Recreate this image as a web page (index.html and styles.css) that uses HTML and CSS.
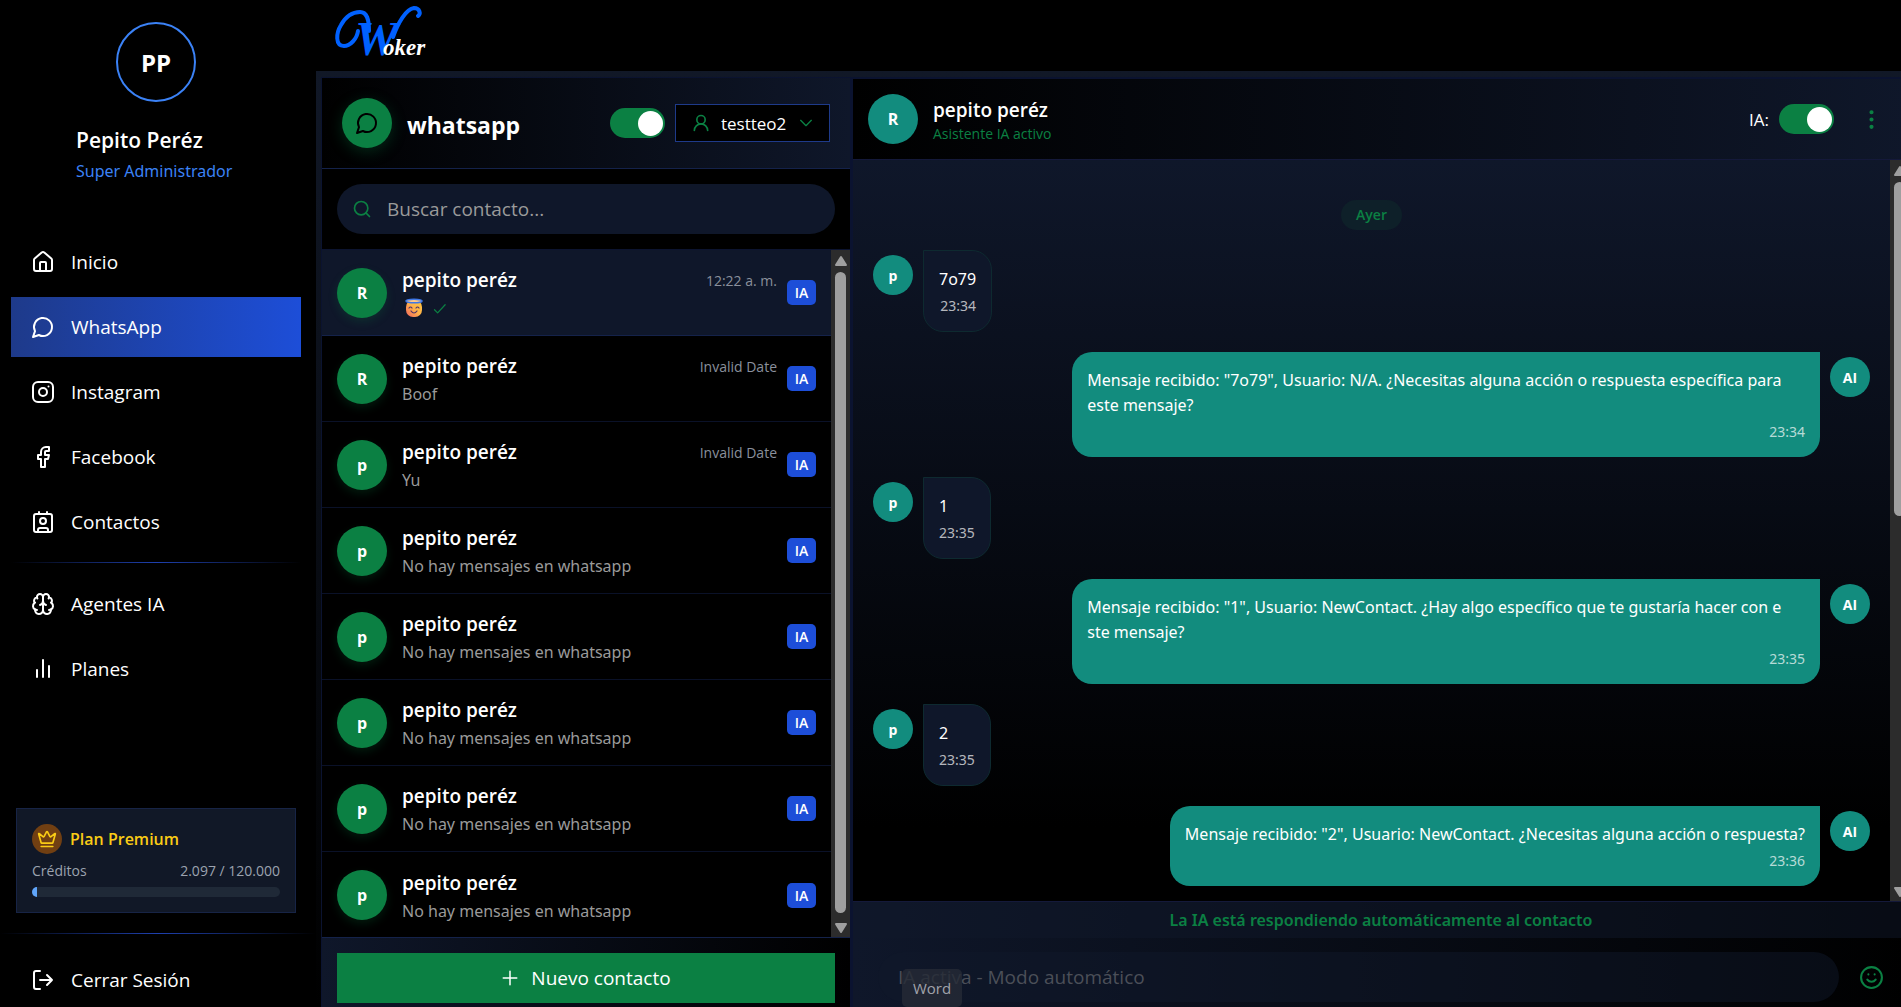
FILE: index.html
```html
<!DOCTYPE html>
<html lang="es">
<head>
    <meta charset="UTF-8">
    <meta name="viewport" content="width=device-width, initial-scale=1.0">
    <title>Woker</title>
    <link rel="stylesheet" href="styles.css">
</head>
<body>
    <!-- shared icons -->
    <svg class="sprite" aria-hidden="true">
        <symbol id="i-chat" viewBox="0 0 24 24"><path d="M7.9 20A9 9 0 1 0 4 16.1L2 22Z"/></symbol>
        <symbol id="i-up" viewBox="0 0 14 12"><path d="M7 2 12 10H2Z"/></symbol>
        <symbol id="i-down" viewBox="0 0 14 12"><path d="M7 10 2 2H12Z"/></symbol>
    </svg>

    <div class="app">
        <aside class="sidebar">
            <div class="avatar-user">PP</div>
            <div class="user-info">
                <h2>Pepito Peréz</h2>
                <p>Super Administrador</p>
            </div>

            <nav class="menu">
                <a href="#" class="menu-item">
                    <svg class="icon" viewBox="0 0 24 24"><path d="M15 21v-8a1 1 0 0 0-1-1h-4a1 1 0 0 0-1 1v8"/><path d="M3 10a2 2 0 0 1 .709-1.528l7-5.999a2 2 0 0 1 2.582 0l7 5.999A2 2 0 0 1 21 10v9a2 2 0 0 1-2 2H5a2 2 0 0 1-2-2z"/></svg>
                    Inicio
                </a>
                <a href="#" class="menu-item active">
                    <svg class="icon"><use href="#i-chat"/></svg>
                    WhatsApp
                </a>
                <a href="#" class="menu-item">
                    <svg class="icon" viewBox="0 0 24 24"><rect x="2" y="2" width="20" height="20" rx="5"/><circle cx="12" cy="12" r="4"/><path d="M17.5 6.5h.01"/></svg>
                    Instagram
                </a>
                <a href="#" class="menu-item">
                    <svg class="icon" viewBox="0 0 24 24"><path d="M18 2h-3a5 5 0 0 0-5 5v3H7v4h3v8h4v-8h3l1-4h-4V7a1 1 0 0 1 1-1h3z"/></svg>
                    Facebook
                </a>
                <a href="#" class="menu-item">
                    <svg class="icon" viewBox="0 0 24 24"><path d="M16 2v2M8 2v2M7 22v-2a2 2 0 0 1 2-2h6a2 2 0 0 1 2 2v2"/><circle cx="12" cy="11" r="3"/><rect x="3" y="4" width="18" height="18" rx="2"/></svg>
                    Contactos
                </a>
                <hr class="divider inset">
                <a href="#" class="menu-item">
                    <svg class="icon" viewBox="0 0 24 24"><path d="M12 5a3 3 0 1 0-5.997.125 4 4 0 0 0-2.526 5.77 4 4 0 0 0 .556 6.588A4 4 0 1 0 12 18Z"/><path d="M12 5a3 3 0 1 1 5.997.125 4 4 0 0 1 2.526 5.77 4 4 0 0 1-.556 6.588A4 4 0 1 1 12 18Z"/><path d="M15 13a4.5 4.5 0 0 1-3-4 4.500 4.500 0 0 1-3 4M17.600 6.500a3 3 0 0 0 .400-1.375M6 5.125a3 3 0 0 0 .400 1.375M3.477 10.900a4 4 0 0 1 .585-.400M19.940 10.500a4 4 0 0 1 .585.400M6 18a4 4 0 0 1-1.970-.520M19.970 17.480A4 4 0 0 1 18 18"/></svg>
                    Agentes IA
                </a>
                <a href="#" class="menu-item">
                    <svg class="icon" viewBox="0 0 24 24"><path d="M18 20v-11M12 20V3M6 20v-7"/></svg>
                    Planes
                </a>
            </nav>

            <div class="plan">
                <div class="plan-title">
                    <span class="plan-badge"><svg class="icon" viewBox="0 0 24 24"><path d="M11.562 3.266a.5.5 0 0 1 .876 0L15.390 8.870a1 1 0 0 0 1.516.294L21.183 5.500a.5.5 0 0 1 .798.519l-2.834 10.246a1 1 0 0 1-.956.734H5.810a1 1 0 0 1-.957-.734L2.020 6.020a.5.5 0 0 1 .798-.519l4.276 3.664a1 1 0 0 0 1.516-.294zM5 21h14"/></svg></span>
                    Plan Premium
                </div>
                <div class="plan-row">
                    <span>Créditos</span>
                    <span>2.097 / 120.000</span>
                </div>
                <div class="bar"><div class="bar-fill" style="width: 2%"></div></div>
            </div>

            <hr class="divider">
            <button class="menu-item logout">
                <svg class="icon" viewBox="0 0 24 24"><path d="M9 21H5a2 2 0 0 1-2-2V5a2 2 0 0 1 2-2h4M16 17l5-5-5-5M21 12H9"/></svg>
                Cerrar Sesión
            </button>
        </aside>

        <main class="main">
            <header class="topbar">
                <svg class="logo" viewBox="0 0 92 54" role="img" aria-label="Woker">
                    <path d="M23 26C22 34 15 41 9 41C0 41 1 28 6 20C11 11 18 7 25 7C32 7 34 14 34 26"/>
                    <path d="M58 32C63 18 71 4 79 3C85 3 86 9 83 11"/>
                    <text class="logo-w" x="20" y="50">W<tspan class="logo-rest" x="48" y="50">oker</tspan></text>
                </svg>
            </header>

            <div class="workspace">
                <section class="contacts">
                    <div class="contacts-head">
                        <span class="channel"><svg class="icon"><use href="#i-chat"/></svg></span>
                        <h1>whatsapp</h1>
                        <input type="checkbox" class="switch" aria-label="whatsapp" checked>
                        <label class="account">
                            <svg class="icon" viewBox="0 0 24 24"><circle cx="12" cy="8" r="5"/><path d="M20 21a8 8 0 0 0-16 0"/></svg>
                            <select aria-label="Cuenta">
                                <option>testteo2</option>
                            </select>
                            <svg class="icon small" viewBox="0 0 24 24"><path d="m4 8 8 8 8-8"/></svg>
                        </label>
                    </div>

                    <div class="search-row">
                        <label class="search">
                            <svg class="icon" viewBox="0 0 24 24"><circle cx="11" cy="11" r="8"/><path d="m21 21-4.300-4.300"/></svg>
                            <input type="text" placeholder="Buscar contacto..." aria-label="Buscar contacto">
                        </label>
                    </div>

                    <div class="list-wrap">
                        <ul class="list">
                            <li class="contact selected">
                                <span class="avatar">R</span>
                                <div class="contact-body">
                                    <h3>pepito peréz</h3>
                                    <p>
                                        <svg class="emoji" viewBox="0 0 20 20" role="img" aria-label="angelito"><defs><linearGradient id="face" x1="0" y1="1" x2="1" y2="0"><stop offset="0" stop-color="#f2625f"/><stop offset=".5" stop-color="#ffb24a"/><stop offset="1" stop-color="#ffc83d"/></linearGradient></defs><rect x="2" y="2" width="16" height="17" rx="7" fill="url(#face)"/><ellipse cx="10" cy="3" rx="8" ry="1.800" fill="#ffc98a" stroke="#3f78e8" stroke-width="1.600"/><path d="M5 10q1.500-2 3 0M12 10q1.500-2 3 0M7 13q3 4 6 0" fill="none" stroke="#533566" stroke-width="1.200" stroke-linecap="round"/></svg>
                                        <svg class="icon check" viewBox="0 0 24 24"><path d="m4 14 5 5L21 6"/></svg>
                                    </p>
                                </div>
                                <time>12:22 a. m.</time>
                                <span class="tag">IA</span>
                            </li>
                            <li class="contact">
                                <span class="avatar">R</span>
                                <div class="contact-body"><h3>pepito peréz</h3><p>Boof</p></div>
                                <time>Invalid Date</time>
                                <span class="tag">IA</span>
                            </li>
                            <li class="contact">
                                <span class="avatar">p</span>
                                <div class="contact-body"><h3>pepito peréz</h3><p>Yu</p></div>
                                <time>Invalid Date</time>
                                <span class="tag">IA</span>
                            </li>
                            <li class="contact">
                                <span class="avatar">p</span>
                                <div class="contact-body"><h3>pepito peréz</h3><p>No hay mensajes en whatsapp</p></div>
                                <span class="tag">IA</span>
                            </li>
                            <li class="contact">
                                <span class="avatar">p</span>
                                <div class="contact-body"><h3>pepito peréz</h3><p>No hay mensajes en whatsapp</p></div>
                                <span class="tag">IA</span>
                            </li>
                            <li class="contact">
                                <span class="avatar">p</span>
                                <div class="contact-body"><h3>pepito peréz</h3><p>No hay mensajes en whatsapp</p></div>
                                <span class="tag">IA</span>
                            </li>
                            <li class="contact">
                                <span class="avatar">p</span>
                                <div class="contact-body"><h3>pepito peréz</h3><p>No hay mensajes en whatsapp</p></div>
                                <span class="tag">IA</span>
                            </li>
                            <li class="contact">
                                <span class="avatar">p</span>
                                <div class="contact-body"><h3>pepito peréz</h3><p>No hay mensajes en whatsapp</p></div>
                                <span class="tag">IA</span>
                            </li>
                        </ul>
                        <div class="scrollbar" aria-hidden="true">
                            <svg class="arrow"><use href="#i-up"/></svg>
                            <div class="track"><div class="thumb"></div></div>
                            <svg class="arrow"><use href="#i-down"/></svg>
                        </div>
                    </div>

                    <div class="contacts-foot">
                        <button class="new-contact">
                            <svg class="icon" viewBox="0 0 24 24"><path d="M3 12h18M12 3v18"/></svg>
                            Nuevo contacto
                        </button>
                    </div>
                </section>

                <section class="chat">
                    <div class="chat-head">
                        <span class="avatar teal">R</span>
                        <div class="chat-who">
                            <h3>pepito peréz</h3>
                            <p>Asistente IA activo</p>
                        </div>
                        <label class="ia-label" for="ia">IA:</label>
                        <input type="checkbox" id="ia" class="switch" checked>
                        <button class="icon-btn more" aria-label="Opciones">
                            <svg class="icon" viewBox="0 0 24 24"><circle cx="12" cy="5" r="1"/><circle cx="12" cy="12" r="1"/><circle cx="12" cy="19" r="1"/></svg>
                        </button>
                    </div>

                    <div class="chat-body">
                        <div class="messages">
                            <div class="day">Ayer</div>
                            <div class="msg in">
                                <span class="avatar small teal">p</span>
                                <div class="bubble"><p>7o79</p><time>23:34</time></div>
                            </div>
                            <div class="msg out">
                                <div class="bubble long"><p>Mensaje recibido: "7o79", Usuario: N/A. ¿Necesitas alguna acción o respuesta específica para<br>este mensaje?</p><time>23:34</time></div>
                                <span class="avatar small teal">AI</span>
                            </div>
                            <div class="msg in">
                                <span class="avatar small teal">p</span>
                                <div class="bubble"><p>1</p><time>23:35</time></div>
                            </div>
                            <div class="msg out">
                                <div class="bubble long"><p>Mensaje recibido: "1", Usuario: NewContact. ¿Hay algo específico que te gustaría hacer con e<br>ste mensaje?</p><time>23:35</time></div>
                                <span class="avatar small teal">AI</span>
                            </div>
                            <div class="msg in">
                                <span class="avatar small teal">p</span>
                                <div class="bubble"><p>2</p><time>23:35</time></div>
                            </div>
                            <div class="msg out">
                                <div class="bubble"><p>Mensaje recibido: "2", Usuario: NewContact. ¿Necesitas alguna acción o respuesta?</p><time>23:36</time></div>
                                <span class="avatar small teal">AI</span>
                            </div>
                        </div>
                        <div class="scrollbar" aria-hidden="true">
                            <svg class="arrow"><use href="#i-up"/></svg>
                            <div class="track"><div class="thumb" style="height: 48%"></div></div>
                            <svg class="arrow"><use href="#i-down"/></svg>
                        </div>
                    </div>

                    <div class="chat-foot">
                        <div class="status">La IA está respondiendo automáticamente al contacto</div>
                        <div class="composer">
                            <input type="text" placeholder="IA activa - Modo automático" aria-label="Mensaje" disabled>
                            <span class="tooltip">Word</span>
                            <button class="icon-btn" aria-label="Emojis">
                                <svg class="icon" viewBox="0 0 24 24"><circle cx="12" cy="12" r="10"/><path d="M8 14s1.500 2 4 2 4-2 4-2M9 9h.01M15 9h.01"/></svg>
                            </button>
                        </div>
                    </div>
                </section>
            </div>
        </main>
    </div>
</body>
</html>
```

FILE: styles.css
```css
* {
    box-sizing: border-box;
}

body, html {
    margin: 0;
    padding: 0;
    height: 100%;
    overflow: hidden;
    background-color: #000;
    color: #fff;
    font-family: "Open Sans", "Noto Sans", sans-serif;
}

h1, h2, h3, p, ul {
    margin: 0;
    padding: 0;
}

button, input, select {
    font-family: inherit;
    color: inherit;
    border: none;
    background: none;
    outline: none;
}

.sprite {
    display: none;
}

.icon {
    flex: none;
    width: 24px;
    height: 24px;
    fill: none;
    stroke: currentColor;
    stroke-width: 2;
    stroke-linecap: round;
    stroke-linejoin: round;
}

.app {
    display: flex;
    height: 100vh;
}

/* running text */
.user-info p,
.contact p,
.bubble,
.status {
    font-family: "Noto Sans", sans-serif;
    font-size: 16px;
}

/* sidebar */
.sidebar {
    flex: none;
    width: 316px;
    display: flex;
    flex-direction: column;
    padding-top: 22px;
}

.avatar-user {
    width: 80px;
    height: 80px;
    margin-left: 116px;
    border: 2px solid #3b82f6;
    border-radius: 50%;
    display: flex;
    align-items: center;
    justify-content: center;
    font-size: 24px;
    font-weight: 700;
}

.user-info {
    margin: 22px 0 38px 76px;
}

.user-info h2 {
    font-size: 21px;
    line-height: 32px;
    font-weight: 600;
}

.user-info p {
    line-height: 30px;
    color: #3b82f6;
}

.menu {
    display: flex;
    flex-direction: column;
    gap: 5px;
    padding: 8px 15px 0 11px;
}

.menu-item {
    display: flex;
    align-items: center;
    gap: 16px;
    height: 60px;
    padding: 0 20px;
    color: #fff;
    font-size: 19px;
    text-decoration: none;
}

.menu-item.active {
    background: linear-gradient(to right, #1e3a8a, #1d4ed8);
}

.divider {
    width: 100%;
    height: 1px;
    margin: 0;
    border: none;
    background: linear-gradient(to right, transparent, #1e40af, transparent);
}

.divider.inset {
    margin: 5px 0 6px;
}

.plan {
    margin: auto 20px 20px 16px;
    padding: 15px;
    background-color: #111827;
    border: 1px solid #172446;
}

.plan-title {
    display: flex;
    align-items: center;
    gap: 8px;
    color: #facc15;
    font-size: 16px;
    line-height: 30px;
    font-weight: 600;
}

.plan-badge {
    width: 30px;
    height: 30px;
    border-radius: 50%;
    background-color: #713f12;
    display: flex;
    align-items: center;
    justify-content: center;
}

.plan-badge .icon {
    width: 20px;
    height: 20px;
}

.plan-row {
    display: flex;
    justify-content: space-between;
    padding: 5px 0;
    color: #9ca3af;
    font-size: 14px;
    line-height: 23px;
}

.bar {
    height: 10px;
    border-radius: 5px;
    background-color: #1f2937;
    overflow: hidden;
}

.bar-fill {
    height: 100%;
    background-color: #60a5fa;
}

.logout {
    flex: none;
    height: 54px;
    margin: 19px 15px 0 11px;
    cursor: pointer;
}

/* main area */
.main {
    flex: 1;
    min-width: 0;
    display: flex;
    flex-direction: column;
}

.topbar {
    flex: none;
    height: 71px;
    padding: 5px 19px;
}

.logo {
    width: 92px;
    height: 54px;
    overflow: visible;
}

.logo path {
    fill: none;
    stroke: #0061ff;
    stroke-width: 4;
    stroke-linecap: round;
}

.logo text {
    font-family: "Liberation Serif", serif;
    font-style: italic;
    font-weight: 700;
}

.logo-w {
    fill: #0061ff;
    font-size: 48px;
}

.logo-rest {
    fill: #fff;
    font-size: 23px;
}

/* the chat runs a little past the window edge */
.workspace {
    flex: 1;
    min-height: 0;
    display: flex;
    margin-right: -8px;
    padding: 6px 0 0 5px;
    background: linear-gradient(#111827, #000);
}

.contacts {
    flex: none;
    width: 532px;
    display: flex;
    flex-direction: column;
    background-color: #000;
    border: solid #0b1330;
    border-width: 1px 3px 0 1px;
}

.contacts-head {
    display: flex;
    align-items: center;
    height: 91px;
    padding: 0 20px;
    background: linear-gradient(to right, #000, #0f172a);
    border-bottom: 1px solid #14224a;
}

.contacts-head h1 {
    margin: 3px auto 0 15px;
    font-size: 23px;
    font-weight: 700;
}

.channel {
    display: flex;
    align-items: center;
    justify-content: center;
    width: 50px;
    height: 50px;
    border-radius: 50%;
    background-color: #0b8043;
    box-shadow: 0 4px 15px rgba(11, 128, 67, 0.3);
    color: #000;
}

.switch {
    appearance: none;
    flex: none;
    width: 55px;
    height: 30px;
    margin: 0;
    padding: 2px;
    border-radius: 15px;
    background-color: #333;
    display: flex;
    align-items: center;
}

.switch::before {
    content: "";
    width: 25px;
    height: 25px;
    border-radius: 50%;
    background-color: #fff;
}

.switch:checked {
    justify-content: flex-end;
    background-color: #0b8043;
}

.account {
    display: flex;
    align-items: center;
    gap: 10px;
    height: 38px;
    margin-left: 10px;
    padding: 0 15px;
    background-color: #000;
    border: 1px solid #1e3a8a;
    color: #0b8043;
}

.account .icon {
    width: 20px;
    height: 20px;
}

.account .icon.small {
    width: 16px;
    height: 16px;
}

.account select {
    appearance: none;
    width: 67px;
    padding: 0;
    color: #fff;
    font-size: 17px;
}

.search-row {
    padding: 15px;
    border-bottom: 1px solid #0c1430;
}

.search {
    display: flex;
    align-items: center;
    gap: 15px;
    height: 50px;
    padding: 0 15px;
    border-radius: 25px;
    background-color: #0f172a;
    color: #0b8043;
}

.search .icon {
    width: 20px;
    height: 20px;
}

.search input {
    flex: 1;
    min-width: 0;
    padding: 0;
    color: #fff;
    font-size: 19px;
}

.search input::placeholder {
    color: #9a9a9a;
}

.list-wrap {
    flex: 1;
    min-height: 0;
    display: flex;
}

.list {
    flex: 1;
    min-width: 0;
    overflow: hidden;
    list-style: none;
}

.contact {
    display: flex;
    align-items: center;
    height: 86px;
    padding: 0 15px;
    border-bottom: 1px solid #0a1128;
}

.contact.selected {
    background-color: #0f172a;
    border-color: #14224a;
}

.contact:last-child {
    border-bottom: none;
}

.avatar {
    flex: none;
    display: flex;
    align-items: center;
    justify-content: center;
    width: 50px;
    height: 50px;
    border-radius: 50%;
    background-color: #0b8043;
    box-shadow: 0 4px 10px rgba(11, 128, 67, 0.2);
    font-size: 16px;
    font-weight: 700;
}

.avatar.teal {
    background-color: #128c7e;
    box-shadow: none;
}

.avatar.small {
    width: 40px;
    height: 40px;
    margin-top: 5px;
    font-size: 14px;
}

.contact-body {
    flex: 1;
    min-width: 0;
    margin-left: 15px;
    padding-top: 3px;
}

.contact h3 {
    font-size: 19px;
    line-height: 28px;
    font-weight: 600;
}

.contact p {
    display: flex;
    align-items: center;
    height: 28px;
    color: #9a9a9a;
}

.emoji {
    width: 20px;
    height: 20px;
    margin-left: 2px;
}

.check {
    width: 15px;
    height: 15px;
    margin-left: 8px;
    color: #0b8043;
}

.contact time {
    align-self: flex-start;
    margin-top: 21px;
    color: #8a909c;
    font-size: 14px;
    line-height: 20px;
}

.tag {
    margin-left: 10px;
    width: 29px;
    border-radius: 5px;
    background-color: #1d4ed8;
    text-align: center;
    font-size: 14px;
    line-height: 25px;
    font-weight: 600;
}

.scrollbar {
    flex: none;
    display: flex;
    flex-direction: column;
    align-items: center;
    gap: 5px;
    width: 19px;
    padding: 5px 0 3px;
    background-color: #2c2c2c;
}

.arrow {
    flex: none;
    width: 14px;
    height: 12px;
    fill: #9f9f9f;
    stroke: #9f9f9f;
    stroke-width: 2;
    stroke-linejoin: round;
}

.track {
    flex: 1;
    width: 11px;
    padding-bottom: 4px;
}

.thumb {
    height: 100%;
    border-radius: 6px;
    background-color: #9f9f9f;
}

.contacts-foot {
    padding: 15px 15px 4px;
    background: linear-gradient(to right, #0f172a, #000);
    border-top: 1px solid #14224a;
}

.new-contact {
    display: flex;
    align-items: center;
    justify-content: center;
    gap: 12px;
    width: 100%;
    height: 50px;
    background-color: #0b8043;
    font-size: 19px;
    cursor: pointer;
}

.new-contact .icon {
    width: 18px;
    height: 18px;
}

/* chat */
.chat {
    flex: 1;
    min-width: 0;
    display: flex;
    flex-direction: column;
    border-top: 2px solid #0b1330;
}

.chat-head {
    flex: none;
    display: flex;
    align-items: center;
    height: 81px;
    padding: 0 15px;
    background: linear-gradient(to right, #000, #0f172a);
    border-bottom: 1px solid #14193a;
}

.chat-who {
    margin: 0 auto 0 15px;
    padding-top: 3px;
}

.chat-who h3 {
    font-size: 19px;
    line-height: 26px;
    font-weight: 600;
}

.chat-who p {
    color: #0b8043;
    font-size: 14px;
    line-height: 22px;
}

.ia-label {
    margin-right: 10px;
    font-size: 17px;
}

.icon-btn {
    display: flex;
    align-items: center;
    justify-content: center;
    width: 45px;
    height: 45px;
    padding: 0;
    color: #0b8043;
    cursor: pointer;
}

.icon-btn .icon {
    width: 25px;
    height: 25px;
}

.more {
    margin-left: 15px;
}

.chat-body {
    flex: 1;
    min-height: 0;
    display: flex;
    background: linear-gradient(#0f172a, #000 90%);
}

.messages {
    flex: 1;
    min-width: 0;
    overflow: hidden;
    display: flex;
    flex-direction: column;
    gap: 20px;
    padding: 40px 20px 15px;
}

.day {
    align-self: center;
    padding: 0 15px;
    border-radius: 15px;
    background-color: #0e2029;
    color: #0b8043;
    font-size: 14px;
    line-height: 30px;
    font-weight: 600;
}

.msg {
    flex: none;
    display: flex;
    gap: 10px;
}

.msg.out {
    justify-content: flex-end;
}

.bubble {
    display: flex;
    flex-direction: column;
    max-width: 75%;
    padding: 16px 15px 11px;
    border-radius: 20px;
    line-height: 25px;
}

.in .bubble {
    border: 1px solid #0e2a30;
    border-top-left-radius: 0;
    background-color: #0f172a;
}

.out .bubble {
    border-top-right-radius: 0;
    background-color: #128c7e;
}

.bubble.long {
    width: 75%;
}

.bubble time {
    align-self: flex-end;
    color: rgba(255, 255, 255, 0.7);
    font-size: 14px;
    line-height: 28px;
}

.chat-foot {
    background: linear-gradient(to right, #0f172a, #000);
    border-top: 1px solid #14193a;
}

.status {
    padding-top: 1px;
    background-color: rgba(15, 23, 42, 0.5);
    color: #0b8043;
    text-align: center;
    line-height: 35px;
    font-weight: 600;
}

.composer {
    position: relative;
    display: flex;
    align-items: center;
    gap: 10px;
    padding: 14px 15px 5px 25px;
}

.composer input {
    flex: 1;
    min-width: 0;
    height: 50px;
    padding: 0 20px;
    border-radius: 25px;
    background-color: rgba(15, 23, 42, 0.5);
    font-size: 19px;
}

.composer input::placeholder {
    color: #4b4f58;
}

.tooltip {
    position: absolute;
    left: 49px;
    bottom: 0;
    padding: 0 11px;
    border-radius: 5px;
    background-color: rgba(38, 42, 54, 0.8);
    color: #a0a3aa;
    font-size: 15px;
    line-height: 38px;
}
```
